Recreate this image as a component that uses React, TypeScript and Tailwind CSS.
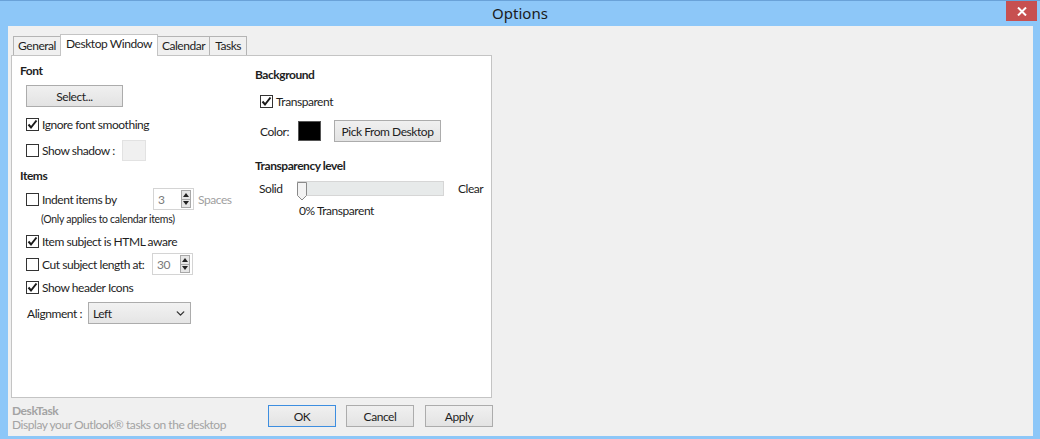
import { ChevronDown } from 'lucide-react';

const font = { fontFamily: 'Lato, "Noto Sans", sans-serif' };

function Check({ checked }: { checked?: boolean }) {
  return (
    <span className="w-[13px] h-[13px] shrink-0 border border-[#333] bg-white flex items-center justify-center">
      {checked && (
        <svg width="11" height="11" viewBox="0 0 11 11">
          <path d="M1.5 5.5 L4 8.5 L9.5 1.5" fill="none" stroke="#1a1a1a" strokeWidth="2" />
        </svg>
      )}
    </span>
  );
}

function CheckRow({ label, checked, className = '' }: { label: string; checked?: boolean; className?: string }) {
  return (
    <div className={`flex items-center gap-[3px] h-[15px] whitespace-nowrap ${className}`}>
      <Check checked={checked} />
      <span>{label}</span>
    </div>
  );
}

function Spin({ value }: { value: string }) {
  return (
    <div className="w-[41px] h-[22px] shrink-0 border border-[#d4d4d4] bg-white flex items-center justify-between pl-[4px] pr-[2px]">
      <span className="text-[#7a7a7a]">{value}</span>
      <div className="flex flex-col w-[10px] h-[18px] border border-[#a8a8a8] bg-[#e6e6e6]">
        <div className="flex-1 flex items-center justify-center border-b border-[#a8a8a8]">
          <svg width="6" height="4" viewBox="0 0 6 4"><path d="M0 4 L3 0 L6 4Z" fill="#222" /></svg>
        </div>
        <div className="flex-1 flex items-center justify-center">
          <svg width="6" height="4" viewBox="0 0 6 4"><path d="M0 0 L3 4 L6 0Z" fill="#222" /></svg>
        </div>
      </div>
    </div>
  );
}

function Btn({ children, className = '', focused }: { children: React.ReactNode; className?: string; focused?: boolean }) {
  return (
    <button
      className={`h-[22px] shrink-0 whitespace-nowrap flex items-center justify-center border bg-gradient-to-b from-[#f0f0f0] to-[#e3e3e3] ${focused ? 'border-[#3d8ee0]' : 'border-[#acacac]'} ${className}`}
    >
      {children}
    </button>
  );
}

export default function App() {
  return (
    <div
      className="w-[1040px] h-[439px] bg-[#8dc7f8] border-t border-[#6aa2d8] flex flex-col text-[12px] leading-[15px] tracking-[-0.45px] text-[#1e1e1e]"
      style={font}
    >
      {/* Title bar */}
      <div className="h-[25px] flex items-start relative">
        <div
          className="flex-1 text-center text-[15px] leading-[24px] tracking-normal text-[#1b1b1b]"
          style={{ fontFamily: '"Noto Sans", sans-serif' }}
        >
          Options
        </div>
        <div className="absolute right-[3px] top-0 w-[31px] h-[20px] bg-[#c75050] flex items-center justify-center">
          <svg width="10" height="9" viewBox="0 0 10 9">
            <path d="M1 0.5 L9 8.5 M9 0.5 L1 8.5" stroke="white" strokeWidth="2" />
          </svg>
        </div>
      </div>

      {/* Client area */}
      <div className="flex-1 ml-[8px] mr-[7px] mb-[3px] bg-[#f0f0f0] pl-[3px] pt-[8px]">
        {/* Tabs */}
        <div className="flex items-end h-[21px] pl-[2px] whitespace-nowrap">
          <div className="h-[19px] px-[4px] border border-[#b4b4b4] border-b-0 bg-[#f0f0f0] leading-[18px]">General</div>
          <div className="h-[22px] px-[5px] border border-[#c4c4c4] border-b-0 bg-white leading-[18px] relative z-10 mb-[-1px] -mx-[1px]">
            Desktop Window
          </div>
          <div className="h-[19px] px-[4px] border border-[#b4b4b4] border-b-0 bg-[#f0f0f0] leading-[18px]">Calendar</div>
          <div className="h-[19px] px-[5px] border border-[#b4b4b4] border-b-0 border-l-0 bg-[#f0f0f0] leading-[18px]">Tasks</div>
        </div>

        {/* Panel */}
        <div className="w-[481px] h-[343px] bg-white border border-[#c4c4c4] flex">
          {/* Left column */}
          <div className="w-[243px] pl-[8px] pt-[7px] flex flex-col">
            <div className="font-bold">Font</div>
            <Btn className="ml-[6px] mt-[7px] w-[97px]">Select...</Btn>
            <CheckRow className="ml-[6px] mt-[10px]" label="Ignore font smoothing" checked />
            <div className="ml-[6px] mt-[8px] flex items-center h-[21px] whitespace-nowrap">
              <div className="w-[96px] shrink-0 flex items-center gap-[3px]">
                <Check />
                <span>Show shadow :</span>
              </div>
              <div className="w-[24px] h-[21px] border border-[#e2e2e2] bg-[#f0f0f0]" />
            </div>
            <div className="font-bold mt-[7px]">Items</div>
            <div className="ml-[6px] mt-[5px] flex items-center h-[22px] whitespace-nowrap">
              <div className="w-[127px] shrink-0 flex items-center gap-[3px]">
                <Check />
                <span>Indent items by</span>
              </div>
              <Spin value="3" />
              <span className="ml-[4px] text-[#a0a0a0]">Spaces</span>
            </div>
            <div className="ml-[21px] mt-[2px] text-[10.5px] leading-[14px] tracking-[-0.3px] whitespace-nowrap">
              (Only applies to calendar items)
            </div>
            <CheckRow className="ml-[6px] mt-[8px]" label="Item subject is HTML aware" checked />
            <div className="ml-[6px] mt-[4px] flex items-center h-[22px] whitespace-nowrap">
              <div className="w-[126px] shrink-0 flex items-center gap-[3px]">
                <Check />
                <span>Cut subject length at:</span>
              </div>
              <Spin value="30" />
            </div>
            <CheckRow className="ml-[6px] mt-[5px]" label="Show header Icons" checked />
            <div className="ml-[7px] mt-[7px] flex items-center h-[22px] whitespace-nowrap">
              <span className="w-[61px] shrink-0">Alignment :</span>
              <div className="w-[103px] h-[22px] border border-[#acacac] bg-gradient-to-b from-[#f2f2f2] to-[#e5e5e5] flex items-center justify-between pl-[4px] pr-[3px]">
                <span>Left</span>
                <ChevronDown size={13} strokeWidth={2.5} className="text-[#333]" />
              </div>
            </div>
          </div>

          {/* Right column */}
          <div className="flex-1 pt-[11px] flex flex-col whitespace-nowrap">
            <div className="font-bold">Background</div>
            <CheckRow className="ml-[5px] mt-[12px]" label="Transparent" checked />
            <div className="ml-[5px] mt-[11px] flex items-center h-[22px]">
              <span className="w-[38px] shrink-0">Color:</span>
              <div className="w-[23px] h-[20px] bg-black border border-[#555]" />
              <Btn className="ml-[13px] w-[107px]">Pick From Desktop</Btn>
            </div>
            <div className="font-bold mt-[16px]">Transparency level</div>
            <div className="ml-[4px] mt-[8px] flex items-center h-[15px]">
              <span className="w-[38px] shrink-0">Solid</span>
              <div className="relative w-[147px] h-[15px] shrink-0 bg-[#e7eaea] border border-[#d6d6d6]">
                <svg className="absolute left-[-1px] top-[0px]" width="11" height="19" viewBox="0 0 11 19">
                  <path d="M0.5 0.5 H9.5 V13.5 L5 18 L0.5 13.5 Z" fill="#f3f3f3" stroke="#8a8a8a" />
                </svg>
              </div>
              <span className="ml-[14px]">Clear</span>
            </div>
            <div className="ml-[44px] mt-[7px]">0% Transparent</div>
          </div>
        </div>

        {/* Footer */}
        <div className="w-[482px] flex items-start">
          <div className="pl-[1px] pt-[6px] text-[#a3a3a3] leading-[14px] whitespace-nowrap">
            <div className="font-bold">DeskTask</div>
            <div>Display your Outlook® tasks on the desktop</div>
          </div>
          <div className="ml-auto mt-[7px] flex">
            <Btn focused className="w-[68px]">OK</Btn>
            <Btn className="w-[68px] ml-[10px]">Cancel</Btn>
            <Btn className="w-[68px] ml-[11px]">Apply</Btn>
          </div>
        </div>
      </div>
    </div>
  );
}
